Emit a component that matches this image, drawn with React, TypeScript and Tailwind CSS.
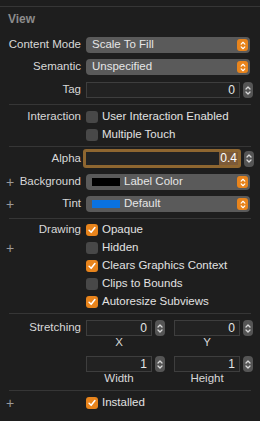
import React from 'react';

const font = { fontFamily: '"Liberation Sans", Arial, sans-serif' };

function Chevrons({ className }: { className?: string }) {
  return (
    <svg viewBox="0 0 8 12" className={className} fill="none" stroke="currentColor" strokeWidth="1.3" strokeLinecap="round" strokeLinejoin="round">
      <path d="M2 4.5 L4 2.5 L6 4.5" />
      <path d="M2 7.5 L4 9.5 L6 7.5" />
    </svg>
  );
}

function Popup({ children }: { children: React.ReactNode }) {
  return (
    <div className="flex h-4 w-[164px] items-center rounded-[4px] bg-[#5a5a5a] pl-[6px] pr-[2px]">
      <div className="flex flex-1 items-center gap-[4px] text-[11.5px] text-[#e6e6e6]">{children}</div>
      <div className="flex h-[12px] w-[11px] items-center justify-center rounded-[3px] bg-[#e8841c] text-white">
        <Chevrons className="h-[11px] w-[8px]" />
      </div>
    </div>
  );
}

function Stepper() {
  return (
    <div className="flex h-[16px] w-[10px] items-center justify-center rounded-[4px] bg-[#555555] text-[#d8d8d8]">
      <Chevrons className="h-[13px] w-[8px]" />
    </div>
  );
}

function NumberField({ value, width, focused }: { value: string; width: string; focused?: boolean }) {
  return (
    <div className="flex items-center gap-[3px]">
      {focused ? (
        <div className={`flex h-[19px] ${width} items-center justify-end rounded-[3px] border-[3px] border-[#8e6630] bg-[#232323]`}>
          <span className="bg-[#7c5a38] px-[1px] text-[12px] leading-[13px] text-white">{value}</span>
        </div>
      ) : (
        <div className={`flex h-[16px] ${width} items-center justify-end border border-[#3e3e3e] bg-[#222222] pr-[4px] text-[12px] text-[#e6e6e6]`}>
          {value}
        </div>
      )}
      <Stepper />
    </div>
  );
}

function Checkbox({ checked, label }: { checked?: boolean; label: string }) {
  return (
    <div className="flex items-center gap-[4px]">
      {checked ? (
        <div className="flex h-[12px] w-[12px] items-center justify-center rounded-[3px] bg-[#e8841c]">
          <svg viewBox="0 0 12 12" className="h-[10px] w-[10px]" fill="none" stroke="white" strokeWidth="1.8" strokeLinecap="round" strokeLinejoin="round">
            <path d="M2.5 6.3 L5 8.8 L9.5 3" />
          </svg>
        </div>
      ) : (
        <div className="h-[12px] w-[12px] rounded-[3px] bg-[#484848]" />
      )}
      <span className="text-[11.5px] text-[#e2e2e2]">{label}</span>
    </div>
  );
}

function Label({ label, plus }: { label?: string; plus?: boolean }) {
  return (
    <div className="flex w-[81px] items-center justify-between whitespace-nowrap">
      <span className="pl-[6px] text-[14px] font-light text-[#9a9a9a]">{plus ? '+' : ''}</span>
      <span className="text-[11.5px] text-[#d8d8d8]">{label}</span>
    </div>
  );
}

function Row({ label, plus, h, children }: { label?: string; plus?: boolean; h: string; children: React.ReactNode }) {
  return (
    <div className={`flex ${h} items-center`}>
      <Label label={label} plus={plus} />
      <div className="ml-[5px] flex items-center">{children}</div>
    </div>
  );
}

function Divider() {
  return <div className="mx-[9px] h-px bg-[#363636]" />;
}

function SubLabels({ a, b, h }: { a: string; b: string; h: string }) {
  return (
    <div className={`flex ${h} items-center pl-[86px] text-[11.5px] text-[#d8d8d8]`}>
      <div className="w-[66px] text-center">{a}</div>
      <div className="ml-[22px] w-[66px] text-center">{b}</div>
    </div>
  );
}

export default function App() {
  return (
    <div className="h-[421px] w-[260px] overflow-hidden bg-[#1e1e1e]" style={font}>
      <div className="h-[6px]" />
      <div className="h-px bg-[#363636]" />
      <div className="flex h-[23px] items-center pl-[8px] text-[12px] font-bold text-[#8c8c8c]">View</div>

      <div className="h-[7px]" />
      <Row label="Content Mode" h="h-[16px]"><Popup>Scale To Fill</Popup></Row>
      <div className="h-[6px]" />
      <Row label="Semantic" h="h-[16px]"><Popup>Unspecified</Popup></Row>
      <div className="h-[7px]" />
      <Row label="Tag" h="h-[16px]"><NumberField value="0" width="w-[154px]" /></Row>
      <div className="h-[6px]" />
      <Divider />

      <div className="h-[3px]" />
      <Row label="Interaction" h="h-[18px]"><Checkbox label="User Interaction Enabled" /></Row>
      <Row h="h-[18px]"><Checkbox label="Multiple Touch" /></Row>
      <div className="h-[2px]" />
      <Divider />

      <div className="h-[2px]" />
      <div className="flex h-[19px] items-center">
        <Label label="Alpha" />
        <div className="ml-[2px] flex items-center">
          <NumberField value="0.4" width="w-[158px]" focused />
        </div>
      </div>
      <div className="h-[6px]" />
      <Row label="Background" plus h="h-[16px]">
        <Popup>
          <span className="h-[8px] w-[28px] bg-black" />
          Label Color
        </Popup>
      </Row>
      <div className="h-[6px]" />
      <Row label="Tint" plus h="h-[16px]">
        <Popup>
          <span className="h-[8px] w-[28px] bg-[#0a72e0]" />
          Default
        </Popup>
      </Row>
      <div className="h-[6px]" />
      <Divider />

      <div className="h-[2px]" />
      <Row label="Drawing" h="h-[18px]"><Checkbox checked label="Opaque" /></Row>
      <Row plus h="h-[18px]"><Checkbox label="Hidden" /></Row>
      <Row h="h-[18px]"><Checkbox checked label="Clears Graphics Context" /></Row>
      <Row h="h-[18px]"><Checkbox label="Clips to Bounds" /></Row>
      <Row h="h-[18px]"><Checkbox checked label="Autoresize Subviews" /></Row>
      <div className="h-[2px]" />
      <Divider />

      <div className="h-[6px]" />
      <Row label="Stretching" h="h-[16px]">
        <div className="flex gap-[9px]">
          <NumberField value="0" width="w-[66px]" />
          <NumberField value="0" width="w-[66px]" />
        </div>
      </Row>
      <SubLabels a="X" b="Y" h="h-[13px]" />
      <div className="h-[7px]" />
      <Row h="h-[16px]">
        <div className="flex gap-[9px]">
          <NumberField value="1" width="w-[66px]" />
          <NumberField value="1" width="w-[66px]" />
        </div>
      </Row>
      <SubLabels a="Width" b="Height" h="h-[13px]" />
      <div className="h-[5px]" />
      <Divider />

      <div className="h-[3px]" />
      <Row plus h="h-[18px]"><Checkbox checked label="Installed" /></Row>
    </div>
  );
}
